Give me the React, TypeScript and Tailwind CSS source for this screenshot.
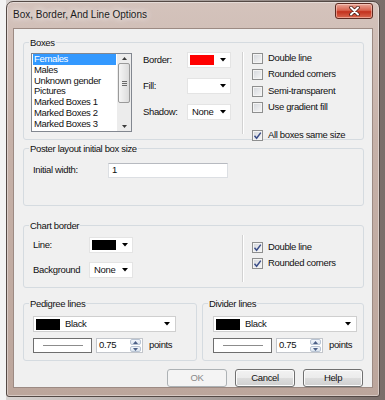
import React from 'react';

const boxTypes = [
  'Females',
  'Males',
  'Unknown gender',
  'Pictures',
  'Marked Boxes 1',
  'Marked Boxes 2',
  'Marked Boxes 3',
];

function Arrow({ up = false, color = '#000' }: { up?: boolean; color?: string }) {
  return (
    <svg width="6" height="3.5" viewBox="0 0 6 3.5" className="shrink-0">
      <path d={up ? 'M0 3.5h6L3 0z' : 'M0 0h6L3 3.5z'} fill={color} />
    </svg>
  );
}

function SmallDrop({ swatch, text, w = 'w-[44px]' }: { swatch?: string; text?: string; w?: string }) {
  return (
    <div className={`${w} h-[16px] flex items-center bg-white border border-[#e4e4e4] pl-[2px] pr-[4px]`}>
      {swatch ? (
        <div className="w-[24px] h-[10px]" style={{ background: swatch }} />
      ) : (
        <span className="pl-[2px]">{text}</span>
      )}
      <div className="ml-auto">
        <Arrow />
      </div>
    </div>
  );
}

function Check({ label, checked = false }: { label: string; checked?: boolean }) {
  return (
    <div className="flex items-center h-[13px]">
      <div className="w-[11px] h-[11px] border border-[#8e8f8f] bg-[linear-gradient(135deg,#d3d6db,#f7f7f7)] shadow-[inset_0_0_0_1px_#f4f4f4] flex items-center justify-center">
        {checked && (
          <svg width="9" height="9" viewBox="0 0 9 9">
            <path d="M1.5 4.8 3.6 7.2 7.8 1.6" stroke="#3a4d88" strokeWidth="1.5" fill="none" />
          </svg>
        )}
      </div>
      <span className="ml-[5px]">{label}</span>
    </div>
  );
}

function Separator({ h }: { h: string }) {
  return <div className={`w-[2px] ${h} bg-[linear-gradient(90deg,#d2d2d2_50%,#ffffff_50%)]`} />;
}

function Group({ title, className, children }: { title: string; className: string; children: React.ReactNode }) {
  return (
    <fieldset className={`border border-[#d5dbe0] rounded-[3px] ${className}`}>
      <legend className="ml-[5px] px-[1px] leading-[11px]">{title}</legend>
      {children}
    </fieldset>
  );
}

function LineSettings() {
  return (
    <>
      <div className="w-full h-[16px] flex items-center bg-white border border-[#cfcfcf] pl-[2px] pr-[5px]">
        <div className="w-[24px] h-[11px] bg-black" />
        <span className="ml-[5px]">Black</span>
        <div className="ml-auto">
          <Arrow />
        </div>
      </div>
      <div className="flex items-center mt-[6px]">
        <div className="w-[59px] h-[15px] border border-[#6e6e6e] bg-white flex items-center justify-center">
          <div className="w-[40px] h-[1px] bg-[#8c8c8c]" />
        </div>
        <div className="ml-[4px] w-[47px] h-[15px] border border-[#c3c6cb] bg-white flex items-center pl-[2px]">
          <span>0.75</span>
          <div className="ml-auto mr-[1px] w-[11px] h-[13px] flex flex-col gap-[1px]">
            <div className="flex-1 rounded-[2px] border border-[#b9c4d3] bg-[linear-gradient(#f2f6fb,#dbe4ef)] flex items-center justify-center">
              <svg width="5" height="3" viewBox="0 0 5 3">
                <path d="M0 3h5L2.5 0z" fill="#4b5f86" />
              </svg>
            </div>
            <div className="flex-1 rounded-[2px] border border-[#b9c4d3] bg-[linear-gradient(#f2f6fb,#dbe4ef)] flex items-center justify-center">
              <svg width="5" height="3" viewBox="0 0 5 3">
                <path d="M0 0h5L2.5 3z" fill="#4b5f86" />
              </svg>
            </div>
          </div>
        </div>
        <span className="ml-[6px]">points</span>
      </div>
    </>
  );
}

function Button({ label, disabled = false }: { label: string; disabled?: boolean }) {
  return (
    <div
      className={
        disabled
          ? 'w-[60px] h-[18px] rounded-[3px] border border-[#adb2b5] bg-[#f4f4f4] text-[#8a8a8a] flex items-center justify-center'
          : 'w-[60px] h-[18px] rounded-[3px] border border-[#707070] bg-[linear-gradient(#f2f2f2,#ebebeb_50%,#dddddd_50%,#cfcfcf)] shadow-[inset_0_0_0_1px_#fbfbfb] flex items-center justify-center'
      }
    >
      {label}
    </div>
  );
}

export default function App() {
  return (
    <div className="w-[385px] h-[400px] overflow-hidden pl-[6px] pt-[1px] bg-[linear-gradient(90deg,#f3f3f3_0px,#f3f3f3_6px,#d8d3d1_6px,#7a6e6a_100%)] font-['Liberation_Sans',Arial,sans-serif] text-[9.5px] tracking-[-0.35px] text-[#111]">
      <div className="w-[374px] h-[396px] flex flex-col rounded-t-[7px] rounded-b-[3px] border border-[#544945] bg-[linear-gradient(180deg,#d4c3bc,#c6b1a8_35%,#bca69c)] shadow-[inset_0_0_0_1px_rgba(255,255,255,0.4)]">
        {/* title bar */}
        <div className="h-[26px] flex items-start px-[6px]">
          <span className="mt-[7px] text-[10px] leading-[12px] tracking-[0px] text-[#1b1b1b] [text-shadow:0_0_6px_rgba(255,255,255,0.95),0_0_10px_rgba(255,255,255,0.7)]">
            Box, Border, And Line Options
          </span>
          <div className="ml-auto mt-[1px] w-[38px] h-[16px] rounded-[3px] border border-[#5d2a21] bg-[linear-gradient(#e9a798,#d8634f_45%,#c3311d_55%,#d8684f)] shadow-[inset_0_0_0_1px_rgba(255,220,210,0.5)] flex items-center justify-center">
            <svg width="11" height="10" viewBox="0 0 11 10">
              <path d="M2 1.5 9 8.5M9 1.5 2 8.5" stroke="#4a1d16" strokeWidth="3.6" strokeLinecap="round" />
              <path d="M2 1.5 9 8.5M9 1.5 2 8.5" stroke="#fff" strokeWidth="2" strokeLinecap="round" />
            </svg>
          </div>
        </div>

        {/* client area */}
        <div className="ml-[6px] w-[360px] h-[360px] border border-[#9c8a83] bg-[#f0f0f0] pl-[9px] pt-[8px] flex flex-col">
          <Group title="Boxes" className="w-[341px] h-[103px]">
            <div className="flex items-start">
              <div className="ml-[7px] mt-[5px] w-[101px] h-[79px] border border-[#828790] bg-white flex">
                <div className="w-[85px] leading-[10.8px]">
                  {boxTypes.map((t, i) => (
                    <div
                      key={t}
                      className={i === 0 ? 'mx-[1px] pl-[1px] bg-[#3399ff] text-white' : 'pl-[2px] whitespace-nowrap'}
                    >
                      {t}
                    </div>
                  ))}
                </div>
                <div className="w-[14px] h-full bg-[#ececec] flex flex-col items-center">
                  <div className="h-[9px] flex items-center">
                    <svg width="5" height="3" viewBox="0 0 5 3">
                      <path d="M0 3h5L2.5 0z" fill="#3c3c3c" />
                    </svg>
                  </div>
                  <div className="w-[12px] h-[40px] rounded-[2px] border border-[#9a9a9a] bg-[linear-gradient(90deg,#f5f5f5,#dcdcdc)] flex flex-col items-center justify-center gap-[1px]">
                    <div className="w-[5px] h-[1px] bg-[#6a6a6a]" />
                    <div className="w-[5px] h-[1px] bg-[#6a6a6a]" />
                    <div className="w-[5px] h-[1px] bg-[#6a6a6a]" />
                  </div>
                  <div className="mt-auto h-[9px] flex items-center">
                    <svg width="5" height="3" viewBox="0 0 5 3">
                      <path d="M0 0h5L2.5 3z" fill="#3c3c3c" />
                    </svg>
                  </div>
                </div>
              </div>

              <div className="ml-[11px] mt-[4px] flex flex-col gap-[10px]">
                <div className="flex items-center h-[16px]">
                  <span className="w-[44px]">Border:</span>
                  <SmallDrop swatch="#ff0000" />
                </div>
                <div className="flex items-center h-[16px]">
                  <span className="w-[44px]">Fill:</span>
                  <SmallDrop swatch="#ffffff" />
                </div>
                <div className="flex items-center h-[16px]">
                  <span className="w-[44px]">Shadow:</span>
                  <SmallDrop text="None" />
                </div>
              </div>

              <div className="ml-[11px] mt-[4px]">
                <Separator h="h-[82px]" />
              </div>

              <div className="ml-[8px] mt-[3.5px] flex flex-col gap-[3.5px]">
                <Check label="Double line" />
                <Check label="Rounded corners" />
                <Check label="Semi-transparent" />
                <Check label="Use gradient fill" />
                <div className="mt-[11.5px]">
                  <Check label="All boxes same size" checked />
                </div>
              </div>
            </div>
          </Group>

          <Group title="Poster layout initial box size" className="mt-[3px] w-[341px] h-[63px]">
            <div className="flex items-center ml-[9px] mt-[9px]">
              <span className="w-[75px]">Initial width:</span>
              <div className="w-[120px] h-[15px] bg-white border border-[#dcdfe3] border-t-[#b7bac0] flex items-center pl-[3px]">
                1
              </div>
            </div>
          </Group>

          <Group title="Chart border" className="mt-[14px] w-[341px] h-[68px]">
            <div className="flex items-start">
              <div className="ml-[9px] mt-[6px] flex flex-col gap-[9px]">
                <div className="flex items-center h-[16px]">
                  <span className="w-[56px]">Line:</span>
                  <SmallDrop swatch="#000000" />
                </div>
                <div className="flex items-center h-[16px]">
                  <span className="w-[56px]">Background</span>
                  <SmallDrop text="None" />
                </div>
              </div>
              <div className="ml-[109px] mt-[4px]">
                <Separator h="h-[47px]" />
              </div>
              <div className="ml-[8px] mt-[9.5px] flex flex-col gap-[3px]">
                <Check label="Double line" checked />
                <Check label="Rounded corners" checked />
              </div>
            </div>
          </Group>

          <div className="mt-[10px] flex gap-[5px]">
            <Group title="Pedigree lines" className="w-[174px] h-[63px]">
              <div className="ml-[9px] mt-[7px] w-[143px]">
                <LineSettings />
              </div>
            </Group>
            <Group title="Divider lines" className="w-[162px] h-[63px]">
              <div className="ml-[10px] mt-[7px] w-[144px]">
                <LineSettings />
              </div>
            </Group>
          </div>

          <div className="mt-[8px] pr-[9px] flex justify-end gap-[8px]">
            <Button label="OK" disabled />
            <Button label="Cancel" />
            <Button label="Help" />
          </div>
        </div>
      </div>
    </div>
  );
}
